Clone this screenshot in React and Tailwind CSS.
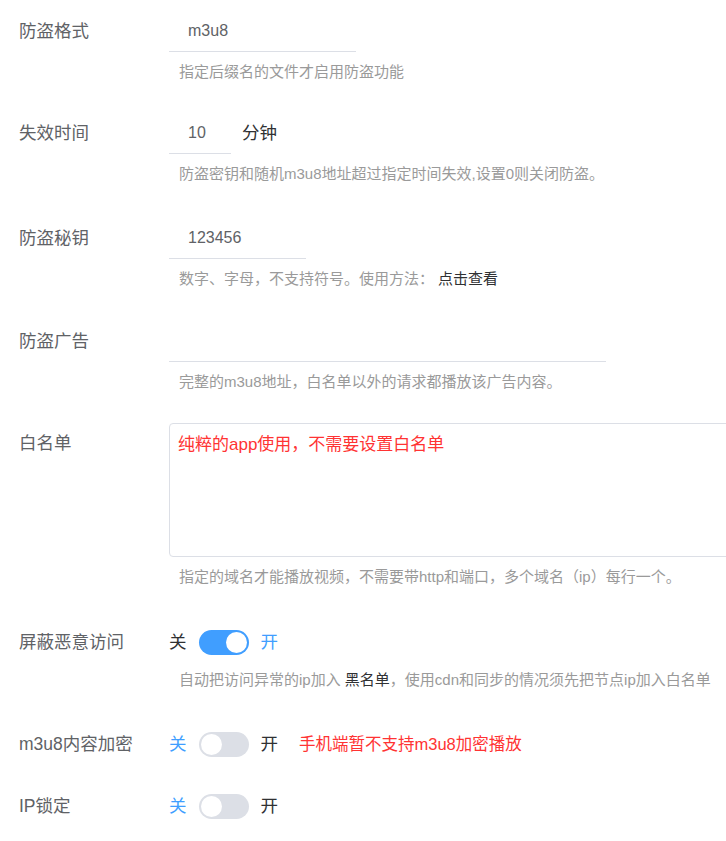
import React, { useState } from "react";

const font = {
  fontFamily: '"Liberation Sans", "Noto Sans CJK SC", sans-serif',
};

function Label({ children }) {
  return (
    <div className="w-[169px] shrink-0 pl-[19px] text-[17.5px] leading-[40px] text-[#606266]">
      {children}
    </div>
  );
}

function Help({ children, className = "mt-[10px]" }) {
  return (
    <div className={`${className} pl-[10px] text-[15px] leading-[20px] text-[#9a9a9a] whitespace-nowrap`}>
      {children}
    </div>
  );
}

function LineInput({ width, value }) {
  return (
    <input
      type="text"
      defaultValue={value}
      className={`h-[41px] border-b border-[#dcdfe6] pl-[19px] text-[16px] text-[#606266] outline-none bg-transparent ${width}`}
    />
  );
}

function Toggle({ on, onChange }) {
  return (
    <div className="flex items-center h-[40px] text-[17.5px]">
      <span className={on ? "text-[#303133]" : "text-[#409eff]"}>关</span>
      <button
        onClick={() => onChange(!on)}
        className={`ml-[12px] mr-[12px] w-[50px] h-[25px] rounded-full p-[2px] flex items-center ${
          on ? "bg-[#409eff] justify-end" : "bg-[#dcdfe6] justify-start"
        }`}
      >
        <span className="block w-[21px] h-[21px] rounded-full bg-white" />
      </button>
      <span className={on ? "text-[#409eff]" : "text-[#303133]"}>开</span>
    </div>
  );
}

export default function App() {
  const [block, setBlock] = useState(true);
  const [encrypt, setEncrypt] = useState(false);
  const [ipLock, setIpLock] = useState(false);

  return (
    <div className="w-[726px] overflow-hidden bg-white pt-[11px] pb-[14px]" style={font}>
      {/* 防盗格式 */}
      <div className="flex mb-[31px]">
        <Label>防盗格式</Label>
        <div>
          <LineInput width="w-[187px]" value="m3u8" />
          <Help>指定后缀名的文件才启用防盗功能</Help>
        </div>
      </div>

      {/* 失效时间 */}
      <div className="flex mb-[34px]">
        <Label>失效时间</Label>
        <div>
          <div className="flex items-center">
            <LineInput width="w-[62px]" value="10" />
            <span className="ml-[11px] text-[17.5px] text-[#303133]">分钟</span>
          </div>
          <Help>防盗密钥和随机m3u8地址超过指定时间失效,设置0则关闭防盗。</Help>
        </div>
      </div>

      {/* 防盗秘钥 */}
      <div className="flex mb-[32px]">
        <Label>防盗秘钥</Label>
        <div>
          <LineInput width="w-[137px]" value="123456" />
          <Help>
            数字、字母，不支持符号。使用方法：
            <span className="ml-[4px] text-[#303133]">点击查看</span>
          </Help>
        </div>
      </div>

      {/* 防盗广告 */}
      <div className="flex mb-[31px]">
        <Label>防盗广告</Label>
        <div>
          <LineInput width="w-[437px]" value="" />
          <Help>完整的m3u8地址，白名单以外的请求都播放该广告内容。</Help>
        </div>
      </div>

      {/* 白名单 */}
      <div className="flex mb-[35px]">
        <Label>白名单</Label>
        <div>
          <div className="relative w-[600px] h-[134px] border border-[#dcdfe6] rounded-[4px]">
            <span className="absolute left-[8px] top-[8px] text-[17px] text-[#ff3333]">
              纯粹的app使用，不需要设置白名单
            </span>
          </div>
          <Help>指定的域名才能播放视频，不需要带http和端口，多个域名（ip）每行一个。</Help>
        </div>
      </div>

      {/* 屏蔽恶意访问 */}
      <div className="flex mb-[34px]">
        <Label>屏蔽恶意访问</Label>
        <div>
          <Toggle on={block} onChange={setBlock} />
          <Help className="mt-[8px]">
            自动把访问异常的ip加入 <span className="text-[#303133]">黑名单</span>，使用cdn和同步的情况须先把节点ip加入白名单
          </Help>
        </div>
      </div>

      {/* m3u8内容加密 */}
      <div className="flex mb-[22px]">
        <Label>m3u8内容加密</Label>
        <div className="flex items-center">
          <Toggle on={encrypt} onChange={setEncrypt} />
          <span className="ml-[21px] text-[16.5px] text-[#ff3333]">手机端暂不支持m3u8加密播放</span>
        </div>
      </div>

      {/* IP锁定 */}
      <div className="flex">
        <Label>IP锁定</Label>
        <Toggle on={ipLock} onChange={setIpLock} />
      </div>
    </div>
  );
}
